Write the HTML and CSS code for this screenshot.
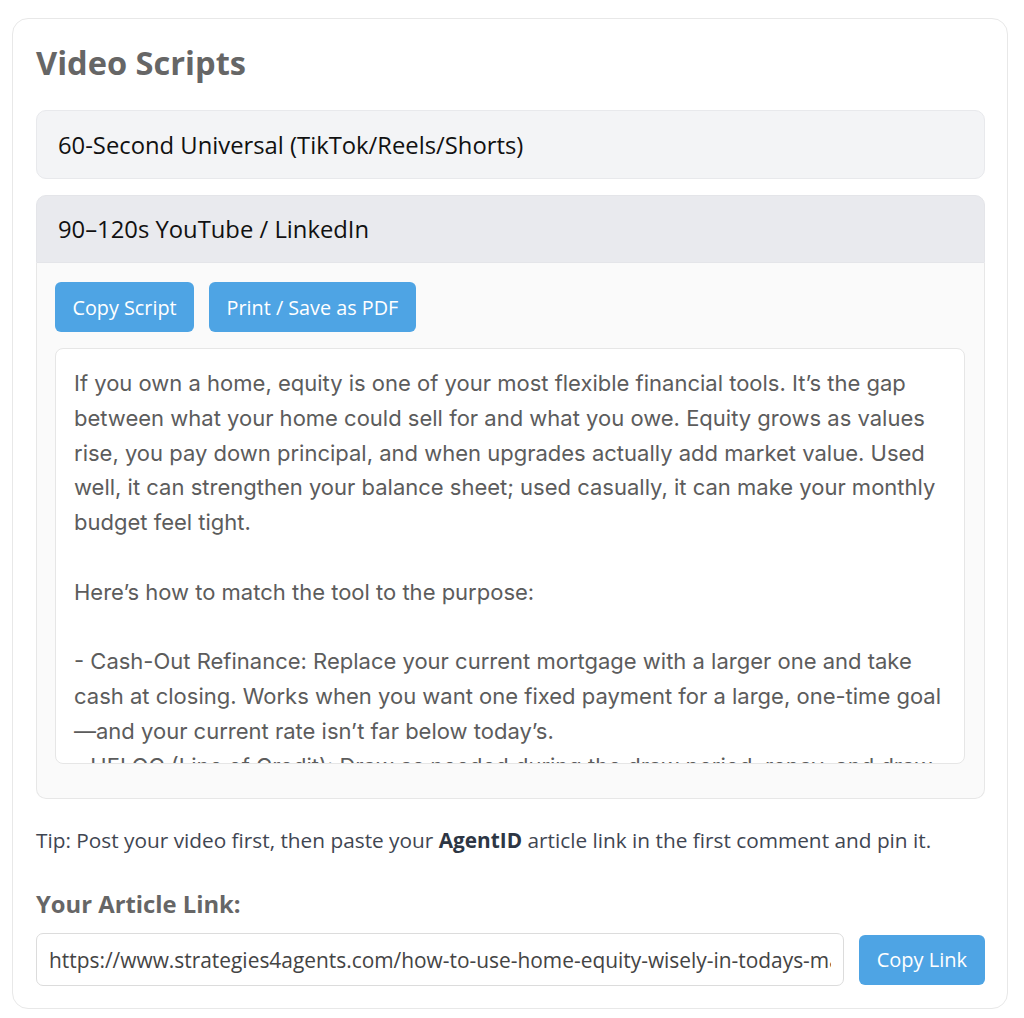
FILE: index.html
```html
<!DOCTYPE html>
<html lang="en">
<head>
<meta charset="utf-8">
<title>Video Scripts</title>
<link rel="stylesheet" href="styles.css">
</head>
<body>
<div class="page">
  <section class="card">
    <h2 class="title">Video Scripts</h2>
    <div class="acc">
      <div class="acc-item">
        <div class="acc-head">60-Second Universal (TikTok/Reels/Shorts)</div>
      </div>
      <div class="acc-item open">
        <div class="acc-head">90–120s YouTube / LinkedIn</div>
        <div class="acc-panel">
          <div class="btn-row">
            <button class="btn">Copy Script</button>
            <button class="btn">Print / Save as PDF</button>
          </div>
          <div class="script">If you own a home, equity is one of your most flexible financial tools. It’s the gap between what your home could sell for and what you owe. Equity grows as values rise, you pay down principal, and when upgrades actually add market value. Used well, it can strengthen your balance sheet; used casually, it can make your monthly budget feel tight.

Here’s how to match the tool to the purpose:

- Cash-Out Refinance: Replace your current mortgage with a larger one and take cash at closing. Works when you want one fixed payment for a large, one-time goal —and your current rate isn’t far below today’s.
- HELOC (Line of Credit): Draw as needed during the draw period, repay, and draw again. Best for projects with uneven costs.</div>
        </div>
      </div>
    </div>
    <p class="tip">Tip: Post your video first, then paste your <strong>AgentID</strong> article link in the first comment and pin it.</p>
    <label class="label" for="link">Your Article Link:</label>
    <div class="link-row">
      <input id="link" class="link-input" type="text" readonly value="https://www.strategies4agents.com/how-to-use-home-equity-wisely-in-todays-market/">
      <button class="btn btn-link">Copy Link</button>
    </div>
  </section>
</div>
</body>
</html>
```

FILE: styles.css
```css
* { box-sizing: border-box; }
html, body { margin: 0; padding: 0; background: #ffffff; }
body { font-family: "Open Sans", "Liberation Sans", sans-serif; }

.page { padding: 18px 16px 8px 12px; }

.card {
  border: 1px solid #e8e8e8;
  border-radius: 16px;
  padding: 22px 22px 22px 23px;
  background: #fff;
}

.title {
  margin: 0 0 25px 0;
  font-size: 32.6px;
  line-height: 44px;
  font-weight: 700;
  color: #666666;
}

.acc { display: flex; flex-direction: column; gap: 16px; }

.acc-item { display: flex; flex-direction: column; }

.acc-head {
  background: #f3f4f6;
  border: 1px solid #e8e9ec;
  border-radius: 10px;
  padding: 0 21px;
  height: 69px;
  display: flex;
  align-items: center;
  font-size: 23.8px;
  color: #111111;
}

.open .acc-head {
  background: #e9eaee;
  border-color: #e4e5e9;
  border-radius: 10px 10px 0 0;
  height: 68px;
}

.acc-panel {
  background: #fafafa;
  border: 1px solid #e7e7e7;
  border-top: none;
  border-radius: 0 0 10px 10px;
  padding: 19px 19px 34px 18px;
  display: flex;
  flex-direction: column;
  gap: 16px;
}

.btn-row { display: flex; gap: 15px; }

.btn {
  background: #4ea4e4;
  color: #ffffff;
  border: none;
  border-radius: 6px;
  height: 50px;
  padding: 0 17.5px;
  font-family: "Open Sans", "Liberation Sans", sans-serif;
  font-size: 19.8px;
}

.script {
  background: #ffffff;
  border: 1px solid #e6e6e6;
  border-radius: 8px;
  height: 416px;
  overflow: hidden;
  padding: 17px 12px 17px 18px;
  white-space: pre-wrap;
  font-family: Inter, "Noto Sans", sans-serif;
  font-size: 22px;
  line-height: 34.8px;
  color: #5c5c5c;
}

.tip {
  margin: 27px 0 0 0;
  font-size: 20.8px;
  line-height: 28px;
  color: #3f4652;
}
.tip strong { color: #2d3644; font-weight: 700; }

.label {
  display: block;
  margin-top: 35px;
  font-size: 23.8px;
  line-height: 30px;
  font-weight: 700;
  color: #666666;
}

.link-row {
  margin-top: 14px;
  display: flex;
  align-items: center;
  gap: 15px;
}

.link-input {
  flex: 1;
  min-width: 0;
  height: 53px;
  border: 1px solid #dcdcdc;
  border-radius: 7px;
  padding: 0 12px;
  font-family: "Open Sans", "Liberation Sans", sans-serif;
  font-size: 20.9px;
  color: #444444;
  background: #fff;
}

.btn-link { font-size: 20px; padding: 0 18px; height: 50px; }
```
